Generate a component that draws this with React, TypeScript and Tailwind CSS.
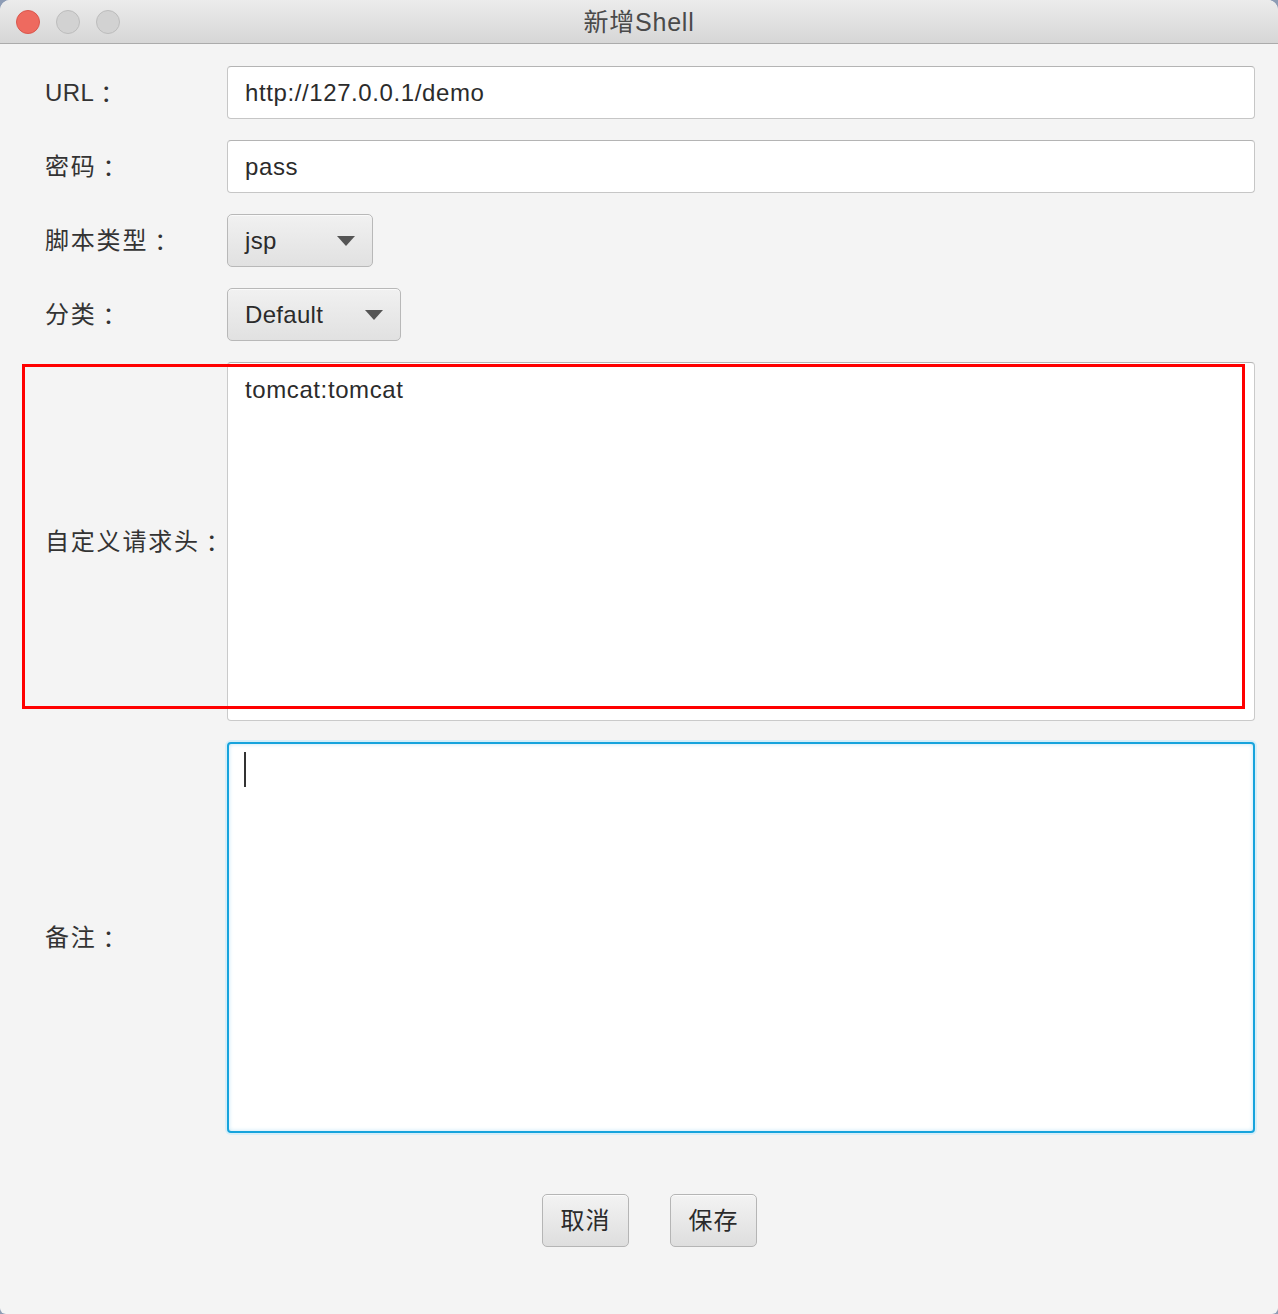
import React from 'react';

const font = { fontFamily: '"Liberation Sans", "Noto Sans CJK SC", sans-serif' };
const colonFont = { fontFamily: '"Noto Sans CJK TC", sans-serif' };

const TrafficLight = ({ color }: { color: string }) => (
  <div className={`w-[24px] h-[24px] rounded-full border ${color}`} />
);

const Combo = ({ value, width }: { value: string; width: string }) => (
  <div
    className={`${width} h-[53px] flex items-center justify-between pl-[17px] pr-[17px] rounded-[5px] border border-[#b8b8b8] bg-gradient-to-b from-[#f1f1f1] to-[#e1e1e1] shadow-[inset_0_1px_0_#fafafa] text-[24px] tracking-[0.3px] text-[#2b2b2b]`}
  >
    <span>{value}</span>
    <svg width="18" height="10" viewBox="0 0 18 10">
      <path d="M0 0 L18 0 L9 10 Z" fill="#555" />
    </svg>
  </div>
);

const Label = ({ text, tracking = 'tracking-[1.8px]' }: { text: string; tracking?: string }) => (
  <div className="flex items-center whitespace-nowrap text-[24px] text-[#333]">
    <span className={tracking}>{text}</span>
    <span style={colonFont}>：</span>
  </div>
);

const Field = ({ value }: { value: string }) => (
  <div className="h-[53px] flex items-center pl-[17px] bg-white rounded-[4px] border border-[#c6c6c6] border-t-[#b4b4b4] text-[24px] tracking-[0.6px] text-[#2b2b2b]">
    {value}
  </div>
);

const Button = ({ text }: { text: string }) => (
  <div className="w-[87px] h-[53px] flex items-center justify-center rounded-[5px] border border-[#b5b5b5] bg-gradient-to-b from-[#f3f3f3] to-[#dedede] shadow-[inset_0_1px_0_#fbfbfb] text-[24px] tracking-[1px] text-[#2b2b2b]">
    {text}
  </div>
);

export default function App() {
  return (
    <div className="w-[1278px] h-[1314px] bg-[#8d9cb5]" style={font}>
      <div className="relative w-full h-full flex flex-col bg-[#f4f4f4] rounded-t-[10px] rounded-b-[6px] overflow-hidden">
        {/* title bar */}
        <div className="relative h-[44px] shrink-0 flex items-center pl-[16px] gap-[16px] bg-gradient-to-b from-[#ececec] to-[#d6d6d6] border-b border-[#ababab]">
          <TrafficLight color="bg-[#ee6a5f] border-[#d9574d]" />
          <TrafficLight color="bg-[#d2d2d2] border-[#bcbcbc]" />
          <TrafficLight color="bg-[#d2d2d2] border-[#bcbcbc]" />
          <div className="absolute inset-0 pt-[2px] flex items-center justify-center text-[25px] tracking-[0.8px] text-[#4a4a4a] pointer-events-none">
            新增Shell
          </div>
        </div>

        {/* form */}
        <div className="pl-[45px] pr-[23px] pt-[22px] grid grid-cols-[182px_1fr] gap-y-[21px]">
          <Label text="URL" tracking="tracking-[0.4px]" />
          <Field value="http://127.0.0.1/demo" />

          <Label text="密码" />
          <Field value="pass" />

          <Label text="脚本类型" />
          <div>
            <Combo value="jsp" width="w-[146px]" />
          </div>

          <Label text="分类" />
          <div>
            <Combo value="Default" width="w-[174px]" />
          </div>

          <Label text="自定义请求头" />
          <div className="h-[359px] bg-white rounded-[4px] border border-[#cacaca] border-t-[#b4b4b4] pl-[17px] pt-[9px] text-[24px] tracking-[0.6px] text-[#2b2b2b]">
            tomcat:tomcat
          </div>

          <Label text="备注" />
          <div className="h-[391px] bg-white rounded-[4px] border-2 border-[#16a3dc] shadow-[0_0_0_2px_#d6eef8,inset_0_0_4px_#bfe4f5] pl-[15px] pt-[8px]">
            <div className="w-[2px] h-[35px] bg-[#333]" />
          </div>
        </div>

        {/* buttons */}
        <div className="mt-[61px] flex pl-[542px] gap-[41px]">
          <Button text="取消" />
          <Button text="保存" />
        </div>

        {/* annotation */}
        <div className="absolute left-[22px] top-[364px] w-[1223px] h-[345px] border-[3px] border-[#ff0000] pointer-events-none" />
      </div>
    </div>
  );
}
